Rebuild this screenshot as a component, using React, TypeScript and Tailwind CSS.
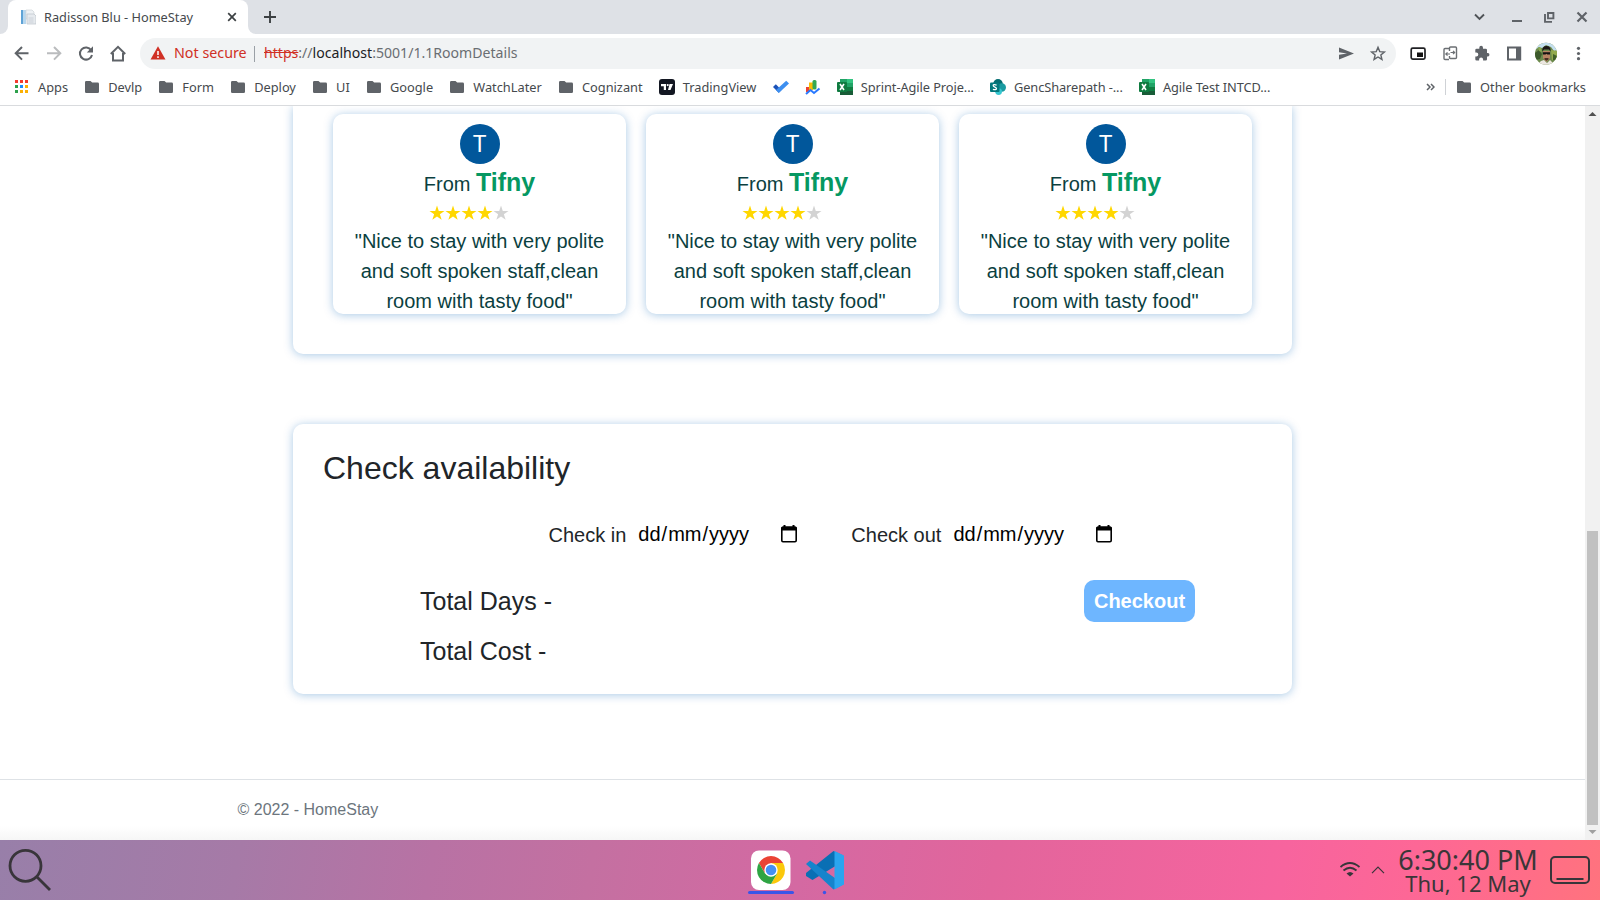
import React from 'react';

const folders = ['Devlp', 'Form', 'Deploy', 'UI', 'Google', 'WatchLater', 'Cognizant'];

function Folder() {
  return (
    <svg width="16" height="16" viewBox="0 0 16 16" className="shrink-0">
      <path d="M2.3 2H6.5L8.2 3.6H13.7A1.3 1.3 0 0 1 15 4.9V12.7A1.3 1.3 0 0 1 13.7 14H2.3A1.3 1.3 0 0 1 1 12.7V3.3A1.3 1.3 0 0 1 2.3 2Z" fill="#5f6368" />
    </svg>
  );
}

function Excel() {
  return (
    <svg width="16" height="16" viewBox="0 0 16 16" className="shrink-0">
      <path d="M3 0h7v4H3z" fill="#21a366" />
      <path d="M10 0h6v4h-6z" fill="#33c481" />
      <path d="M3 4h7v4H3z" fill="#107c41" />
      <path d="M10 4h6v4h-6z" fill="#21a366" />
      <path d="M3 8h13v8H3z" fill="#185c37" />
      <path d="M10 8h6v4h-6z" fill="#107c41" />
      <rect y="3" width="10" height="10" rx="1" fill="#0f7b40" />
      <path d="M3 5l4 6M7 5l-4 6" stroke="#fff" strokeWidth="1.6" />
    </svg>
  );
}

function SharePoint() {
  return (
    <svg width="16" height="16" viewBox="0 0 16 16" className="shrink-0">
      <circle cx="8" cy="4.8" r="4.8" fill="#036c70" />
      <circle cx="11.8" cy="8.5" r="4.2" fill="#1a9ba1" />
      <circle cx="8.6" cy="12.6" r="3.4" fill="#37c6d0" />
      <rect y="3.5" width="9.5" height="9.5" rx="1" fill="#03787c" />
      <path d="M6.6 6.1Q3 5 3.2 6.8C3.4 8.3 6.6 8 6.5 9.6Q6.3 11.2 2.9 10.3" stroke="#fff" strokeWidth="1.3" fill="none" />
    </svg>
  );
}

function AppsGrid() {
  const colors = ['#f33b2f', '#f33b2f', '#f33b2f', '#2da14c', '#1a8cff', '#fbb004', '#2da14c', '#fbb004', '#fbb004'];
  return (
    <svg width="16" height="16" viewBox="0 0 16 16" className="shrink-0">
      {colors.map((c, i) => (
        <rect key={i} x={1 + (i % 3) * 5} y={1 + Math.floor(i / 3) * 5} width="3" height="3" fill={c} />
      ))}
    </svg>
  );
}

function Bookmark({ icon, label }: { icon: React.ReactNode; label?: string }) {
  return (
    <div className="flex h-5 shrink-0 items-center gap-2">
      {icon}
      {label && <span className={label.endsWith('...') ? 'whitespace-nowrap pt-[2px] tracking-[-0.08px]' : 'whitespace-nowrap pt-[2px]'}>{label}</span>}
    </div>
  );
}

function TabStrip() {
  return (
    <div className="flex h-[34px] shrink-0 bg-[#dee1e6]">
      <div className="flex w-[8px] shrink-0 items-end bg-white">
        <div className="h-full w-full rounded-br-lg bg-[#dee1e6]" />
      </div>
      <div className="flex w-60 shrink-0 items-center rounded-t-lg bg-white pl-3 pr-[10px]">
        <svg width="16" height="16" viewBox="0 0 16 16" className="shrink-0">
          <rect x="1" y="1" width="5" height="14" fill="#5fa3d6" />
          <rect x="3" y="1" width="3" height="14" fill="#b8d7ee" />
          <path d="M6 1h6l2 2v7H6z" fill="#eef1f4" stroke="#cfd4d9" strokeWidth=".7" />
          <path d="M7 5h7l2 2v8H7z" fill="#e6eaee" stroke="#bcc3ca" strokeWidth=".7" />
          <path d="M8.5 9h5M8.5 11h5M8.5 13h5" stroke="#c5ccd3" strokeWidth=".8" />
        </svg>
        <span className="ml-2 flex-1 whitespace-nowrap pt-px text-[12.75px] text-[#45494d]">Radisson Blu - HomeStay</span>
        <svg width="12" height="12" viewBox="0 0 12 12">
          <path d="M2.2 2.2l7.6 7.6M9.8 2.2l-7.6 7.6" stroke="#3c4043" strokeWidth="1.7" />
        </svg>
      </div>
      <div className="flex w-[8px] shrink-0 bg-white">
        <div className="h-full w-full rounded-bl-lg bg-[#dee1e6]" />
      </div>
      <svg width="14" height="14" viewBox="0 0 14 14" className="ml-[7px] mt-[10px]">
        <path d="M7 1v12M1 7h12" stroke="#3c4043" strokeWidth="1.9" />
      </svg>
      <div className="flex-1" />
      <div className="mr-[9px] flex items-center">
        <svg width="12" height="12" viewBox="0 0 12 12" className="mr-[26px]">
          <path d="M1 3.5L5.5 8l4.5-4.5" stroke="#4f5357" strokeWidth="1.9" fill="none" />
        </svg>
        <svg width="12" height="12" viewBox="0 0 12 12" className="mr-[20px]">
          <path d="M0 10h10" stroke="#5f6368" strokeWidth="2" />
        </svg>
        <svg width="12" height="12" viewBox="0 0 12 12" className="mr-[20px]">
          <path d="M4 2h5.4v5.4H4z" stroke="#5f6368" strokeWidth="1.9" fill="none" />
          <path d="M1 3v7.9h7" stroke="#5f6368" strokeWidth="1.9" fill="none" />
        </svg>
        <svg width="12" height="12" viewBox="0 0 12 12" className="mr-[3px]">
          <path d="M1.5 1.5l9 9M10.5 1.5l-9 9" stroke="#5f6368" strokeWidth="2.2" />
        </svg>
      </div>
    </div>
  );
}

function Toolbar() {
  return (
    <div className="flex h-[37px] shrink-0 items-center bg-white pt-[2px]">
      <svg width="130" height="24" viewBox="0 0 130 24" className="shrink-0" fill="none">
        <path d="M28.5 11.3H16M22 5l-6.3 6.3L22 17.6" stroke="#5f6368" strokeWidth="2" />
        <path d="M47 11.3h12.5M54 5l6.3 6.3-6.3 6.3" stroke="#babcbe" strokeWidth="2" />
        <path d="M91.2 8.2A6.1 6.1 0 1 0 92 12.9" stroke="#5f6368" strokeWidth="2" />
        <path d="M93 4.3V10.5h-6.2z" fill="#5f6368" />
        <path d="M110.8 12L118 4.9l7.2 7.1M113 11v7.4h10V11" stroke="#5f6368" strokeWidth="2" />
      </svg>
      <div className="ml-[10px] flex h-[31px] w-[1256px] shrink-0 items-center rounded-full bg-[#f1f3f4] pl-[10px] pr-2 text-[14.1px]">
        <svg width="16" height="16" viewBox="0 0 16 16" className="mb-px">
          <path d="M8 1.2L15.5 14.5H.5z" fill="#d03025" />
          <path d="M8 6v4M8 11.3v1.6" stroke="#fff" strokeWidth="1.5" />
        </svg>
        <span className="ml-2 w-[73px] whitespace-nowrap pb-[2px] text-[14.3px] text-[#d03025]">Not secure</span>
        <span className="ml-[7px] h-4 w-px bg-[#9aa0a6]" />
        <span className="ml-[9px] flex-1 whitespace-nowrap pb-[2px] text-[#6a6e72]">
          <span className="text-[#d03025] line-through">https</span>://<span className="text-[#202124]">localhost</span>:5001/1.1RoomDetails
        </span>
        <svg width="50" height="20" viewBox="0 0 50 20">
          <path d="M1 3.5l15 6-15 6v-4.7L9 9.5 1 8.2z" fill="#5f6368" />
          <path d="M40 3.3l1.75 4.3 4.65.35-3.55 3 1.1 4.5L40 13l-3.95 2.45 1.1-4.5-3.55-3 4.65-.35z" fill="none" stroke="#5f6368" strokeWidth="1.4" />
        </svg>
      </div>
      <svg width="204" height="24" viewBox="1396 0 204 24" className="shrink-0" fill="none">
        <rect x="1411.2" y="6.2" width="13.8" height="10.9" rx="1.5" stroke="#202124" strokeWidth="1.7" />
        <rect x="1417" y="10.5" width="6" height="4.5" fill="#111" />
        <path d="M1449 17.5H1445a1 1 0 0 1-1-1V7.5a1 1 0 0 1 1-1h4" stroke="#6b6f73" strokeWidth="1.4" />
        <path d="M1449.5 9V6a1 1 0 0 1 1-1h5a1 1 0 0 1 1 1v9.5a1 1 0 0 1-1 1h-5a1 1 0 0 1-1-1V14" stroke="#6b6f73" strokeWidth="1.4" />
        <path d="M1450 12h-4M1447.5 10.3l-1.7 1.7 1.7 1.7M1450.5 10.5h4M1453 8.8l1.7 1.7-1.7 1.7" stroke="#6b6f73" strokeWidth="1.2" />
        <path d="M1488 11h-1V8q0-1.3-1.3-1.3h-2.7V5.7a1.85 1.85 0 0 0-3.7 0v1h-2.7q-1.3 0-1.3 1.3v2.6h1a2 2 0 0 1 0 4h-1v2.6q0 1.3 1.3 1.3h2.5v-1a2 2 0 0 1 4 0v1h2.6q1.3 0 1.3-1.3v-2.6h1a1.85 1.85 0 0 0 0-3.6z" fill="#5f6368" />
        <path d="M1508 5.5h12.2v12h-12.2z" stroke="#5f6368" strokeWidth="2" />
        <path d="M1516 5.5h4.5v12h-4.5z" fill="#5f6368" />
        <clipPath id="face">
          <circle cx="1546" cy="11.8" r="11" />
        </clipPath>
        <g clipPath="url(#face)">
          <path d="M1535 0h22v24h-22z" fill="#6c8a4c" />
          <path d="M1535 0h22v8l-3 1-3-4-5-2-4 3-3-1-4 3z" fill="#c4dff0" />
          <path d="M1535 11l4-3 3 4-2 5-5 1z" fill="#3d5a2c" />
          <path d="M1538 5l3 1 1 4-3-1z" fill="#8aa94f" />
          <path d="M1551 8l6 1v8l-5 1z" fill="#93aa4e" />
          <path d="M1553 12l4 2v5l-4-1z" fill="#41602a" />
          <path d="M1537 23l4-4 3-1 3 3 3-3 5 5z" fill="#ece6e0" />
          <path d="M1543 9h7v7l-3.5 4-3.5-4z" fill="#b88463" />
          <path d="M1542.3 9.5q-.5-5.5 4.2-5.5t4 5.5l-1.5-2h-5z" fill="#1b1718" />
          <path d="M1542.8 10.3h7.2v2.2h-2.8l-.8-.8-.8.8h-2.8z" fill="#111" />
          <path d="M1544.5 16h4v1.5l-2 1.3-2-1.3z" fill="#4a2f25" />
        </g>
        <circle cx="1578.5" cy="6.3" r="1.6" fill="#5f6368" />
        <circle cx="1578.5" cy="11.5" r="1.6" fill="#5f6368" />
        <circle cx="1578.5" cy="16.7" r="1.6" fill="#5f6368" />
      </svg>
    </div>
  );
}

function BookmarksBar() {
  return (
    <div className="flex h-[35px] shrink-0 items-center gap-[16.16px] border-b border-[#d9dbde] bg-white pb-[2px] pl-[14px] pr-[14px] text-[12.8px] text-[#45494d]">
      <Bookmark icon={<AppsGrid />} label="Apps" />
      {folders.map((f) => (
        <Bookmark key={f} icon={<Folder />} label={f} />
      ))}
      <Bookmark
        icon={
          <svg width="16" height="16" viewBox="0 0 16 16">
            <rect width="16" height="16" rx="3" fill="#131722" />
            <path d="M2 5h5v6H4.8V7.3H2zM10.5 5H14l-2.5 6H9z" fill="#fff" />
            <circle cx="8.7" cy="6.1" r="1.1" fill="#fff" />
          </svg>
        }
        label="TradingView"
      />
      <Bookmark
        icon={
          <svg width="16" height="16" viewBox="0 0 16 16">
            <path d="M0 8l2.8-2.8L8.5 11l-2.8 2.8z" fill="#1b52b8" />
            <path d="M3 11L13.2 1.8 16 4.6 5.8 13.9z" fill="#3d8ff0" />
          </svg>
        }
      />
      <Bookmark
        icon={
          <svg width="16" height="16" viewBox="0 0 16 16">
            <path d="M1 8h4v5H1z" fill="#ea4335" />
            <path d="M4 3.5h4V11H4z" fill="#fbbc04" />
            <rect x="7.5" y="1" width="4" height="9.5" rx="1.5" fill="#34a853" />
            <path d="M1 15l4.5-4 3.5 3L14.5 9.5" stroke="#2979ff" strokeWidth="2" fill="none" />
          </svg>
        }
      />
      <Bookmark icon={<Excel />} label="Sprint-Agile Proje..." />
      <Bookmark icon={<SharePoint />} label="GencSharepath -..." />
      <Bookmark icon={<Excel />} label="Agile Test INTCD..." />
      <div className="flex-1" />
      <svg width="9" height="8" viewBox="0 0 9 8" className="-mr-[6px]">
        <path d="M1 1l3 3-3 3M5 1l3 3-3 3" stroke="#5f6368" strokeWidth="1.5" fill="none" />
      </svg>
      <span className="-mr-[6px] h-4 w-px bg-[#cfd2d6]" />
      <Bookmark icon={<Folder />} label="Other bookmarks" />
    </div>
  );
}

function ReviewCard() {
  return (
    <div className="flex h-[200px] w-[293px] flex-col items-center rounded-[10px] bg-white pt-[10px] text-center text-[20px] leading-[30px] text-[#0b3f3f] shadow-[0_1px_10px_rgba(0,98,180,0.34)]">
      <div className="flex size-10 shrink-0 items-center justify-center rounded-full bg-[#01579b] pt-[2px] font-['Roboto',sans-serif] text-[23px] text-white">T</div>
      <div className="h-[36px] w-full shrink-0 leading-[36px]">
        From <span className="text-[25px] font-bold text-[#059862]">Tifny</span>
      </div>
      <div className="mr-[21px] flex h-[26px] shrink-0 items-center">
        {[0, 1, 2, 3, 4].map((i) => (
          <svg key={i} width="16" height="16" viewBox="0 0 16 16">
            <path
              d="M8 .5L9.77 5.96H15.5L10.87 9.33 12.64 14.8 8 11.42 3.36 14.8 5.13 9.33.5 5.96H6.23z"
              fill={i < 4 ? '#ffd700' : '#d3d3d3'}
            />
          </svg>
        ))}
      </div>
      <p className="w-[256px] shrink-0">&quot;Nice to stay with very polite and soft spoken staff,clean room with tasty food&quot;</p>
    </div>
  );
}

function DateField({ label }: { label: string }) {
  return (
    <label className="flex items-center whitespace-nowrap text-[20px] leading-[30px] text-[#212529]">
      {label}
      <span className="-mt-[2px] ml-[11px] flex w-[161px] items-center justify-between text-black">
        <span className="flex">
          <span className="px-px">dd</span>/<span className="px-px">mm</span>/<span className="px-px">yyyy</span>
        </span>
        <svg width="18" height="20" viewBox="0 0 18 20">
          <rect x="1.8" y="3.3" width="14.4" height="14.4" rx="1.2" fill="none" stroke="#000" strokeWidth="1.6" />
          <path d="M1 4.5Q1 2.5 3 2.5H15Q17 2.5 17 4.5V6.5H1zM3.5 1h2v2h-2zM12.5 1h2v2h-2z" fill="#000" />
        </svg>
      </span>
    </label>
  );
}

function Page() {
  return (
    <div className="flex w-[1585px] flex-col overflow-hidden bg-white font-['Liberation_Sans',Arial,sans-serif]">
      <div className="ml-[293px] flex h-[248px] w-[999px] shrink-0 gap-5 rounded-b-[10px] pl-10 pt-2 shadow-[0_1px_10px_rgba(0,98,180,0.34)]">
        <ReviewCard />
        <ReviewCard />
        <ReviewCard />
      </div>
      <section className="ml-[293px] mt-[70px] h-[270px] w-[999px] shrink-0 rounded-[10px] pt-[25px] text-[#212529] shadow-[0_1px_10px_rgba(0,98,180,0.34)]">
        <h2 className="pl-[30px] text-[32px] leading-[38px]">Check availability</h2>
        <div className="mt-[33px] flex h-[30px] gap-[53px] pl-[255.5px]">
          <DateField label="Check in" />
          <DateField label="Check out" />
        </div>
        <div className="mt-[30px] flex h-[42px] items-center justify-between pl-[127px] pr-[97px]">
          <span className="pt-[2px] text-[25px]">Total Days -</span>
          <button className="h-[42px] w-[111px] rounded-[10px] bg-[#6eb6ff] text-[20px] font-bold text-white">Checkout</button>
        </div>
        <div className="mt-[9px] flex h-[42px] items-center pl-[127px] text-[25px]">Total Cost -</div>
      </section>
      <footer className="mt-[85px] flex-1 border-t border-[#dee2e6] bg-[linear-gradient(to_top,#f6f6f6_0px,#ffffff_14px)] pl-[237.5px] text-[16px] leading-[60px] text-[#6c757d]">
        &copy; 2022 - HomeStay
      </footer>
    </div>
  );
}

function Taskbar() {
  return (
    <div className="flex h-[60px] shrink-0 items-center bg-[linear-gradient(100deg,#987fa9_0%,#a67aa7_15%,#b872a4_27%,#c470a1_37%,#d469a2_50%,#e2659c_62%,#f7649e_80%,#fd6796_88%,#ff6d88_95%,#ff737e_100%)] text-[#3a3638]">
      <svg width="60" height="60" viewBox="0 0 60 60" fill="none" stroke="#38353a">
        <circle cx="25.5" cy="25.8" r="15.5" strokeWidth="2.8" />
        <path d="M36.5 36.5L50 50" strokeWidth="2.8" />
      </svg>
      <svg width="110" height="60" viewBox="740 0 110 60" className="ml-[680px]">
        <rect x="751" y="10.5" width="39.5" height="39.5" rx="8" fill="#fff" />
        <path d="M758.9 23A14 14 0 0 1 783.1 23H771L765 33.5z" fill="#ea4335" />
        <path d="M783.1 23A14 14 0 0 1 771 44L777.1 33.5 771 23z" fill="#fbc80b" />
        <path d="M758.9 23A14 14 0 0 0 771 44L777.1 33.5H765z" fill="#2ea443" />
        <circle cx="771" cy="30" r="6.7" fill="#fff" />
        <circle cx="771" cy="30" r="5.3" fill="#4490f4" />
        <rect x="748" y="51" width="46" height="3" rx="1.5" fill="#3a55e8" />
        <path d="M833.5 11L842 15V22L812.5 40 806 36V33z" fill="#0a6fb4" />
        <path d="M806 24L810 20.5 842 43V45L833.5 49.5z" fill="#1684cc" />
        <path d="M834.5 11L844 15.5V44.5L834.5 49.5Z" fill="#2ba5ef" />
        <circle cx="824.5" cy="52.5" r="1.7" fill="#3a55e8" />
      </svg>
      <div className="flex-1" />
      <svg width="50" height="24" viewBox="0 0 50 24" fill="none" stroke="#38353a">
        <path d="M.5 9Q10 1 19.5 9M3.5 12.5Q10 7 16.5 12.5" strokeWidth="1.8" />
        <path d="M6.5 15.5Q10 12.5 13.5 15.5L10 18.5z" fill="#38353a" stroke="none" />
        <path d="M32 15.2L38 9.2l6 6" strokeWidth="1.2" />
      </svg>
      <div className="ml-[8.5px] flex w-[140px] flex-col items-center font-['Noto_Sans',sans-serif]">
        <span className="whitespace-nowrap text-[27px] leading-[26px]">6:30:40 PM</span>
        <span className="whitespace-nowrap text-[22px] leading-[20px]">Thu, 12 May</span>
      </div>
      <svg width="40" height="28" viewBox="0 0 40 28" fill="none" stroke="#38353a" className="ml-[12px] mr-[10px]">
        <rect x="1" y="1" width="38" height="26" rx="4" strokeWidth="2" />
        <path d="M6.5 23h27" strokeWidth="2" />
      </svg>
    </div>
  );
}

export default function App() {
  return (
    <div className="flex h-[900px] w-[1600px] flex-col overflow-hidden bg-white font-['Noto_Sans',sans-serif]">
      <TabStrip />
      <Toolbar />
      <BookmarksBar />
      <div className="flex h-[734px] shrink-0">
        <Page />
        <div className="flex w-[15px] flex-col items-center bg-[#f1f1f1]">
          <svg width="15" height="15" viewBox="0 0 15 15" className="shrink-0">
            <path d="M3.5 10l4-4 4 4z" fill="#505050" />
          </svg>
          <div className="mt-[410px] h-[294px] w-[11px] bg-[#c1c1c1]" />
          <svg width="15" height="15" viewBox="0 0 15 15" className="shrink-0">
            <path d="M3.5 5l4 4 4-4z" fill="#a0a0a0" />
          </svg>
        </div>
      </div>
      <Taskbar />
    </div>
  );
}
